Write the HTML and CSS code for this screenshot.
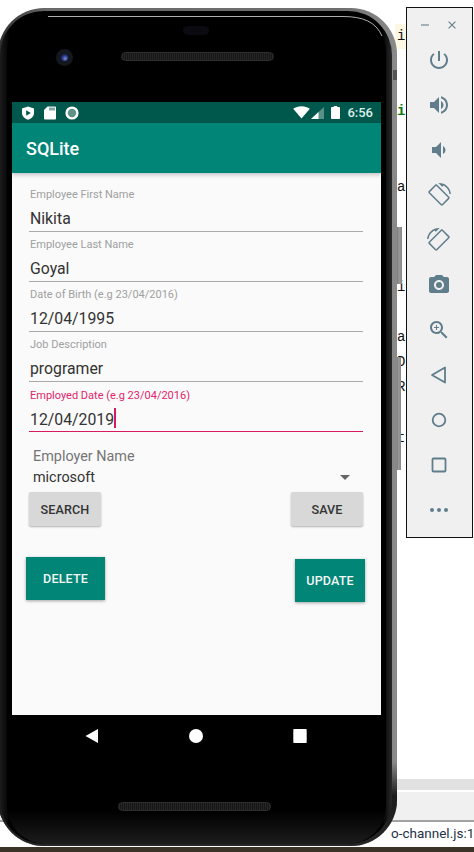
FILE: index.html
```html
<!DOCTYPE html>
<html lang="en">
<head>
<meta charset="utf-8">
<title>SQLite emulator</title>
<link rel="stylesheet" href="styles.css">
</head>
<body>
<div class="desktop">
  <div class="editor">
    <div class="code-line current">i</div>
    <div class="code-line"></div>
    <div class="code-line"></div>
    <div class="code-line keyword">i</div>
    <div class="code-line"></div>
    <div class="code-line"></div>
    <div class="code-line">a</div>
    <div class="code-line"></div>
    <div class="code-line"></div>
    <div class="code-line"></div>
    <div class="code-line">i</div>
    <div class="code-line"></div>
    <div class="code-line">a</div>
    <div class="code-line">D</div>
    <div class="code-line">R</div>
    <div class="code-line"></div>
    <div class="code-line">t</div>
  </div>

  <div class="devtools">
    <div class="tab-strip"></div>
    <div class="toolbar-strip"></div>
    <div class="console-line">o-channel.js:1</div>
    <div class="taskbar"></div>
  </div>

  <div class="side-button side-button-power"></div>
  <div class="side-button side-button-volume"></div>

  <div class="phone">
    <svg class="frame" viewBox="0 0 399 840" aria-hidden="true">
      <defs>
        <linearGradient id="rim" x1="0" y1="0" x2="1" y2="0">
          <stop offset="0" stop-color="#2e2e2e"/>
          <stop offset="0.12" stop-color="#6a6a6a"/>
          <stop offset="0.85" stop-color="#6e6e6e"/>
          <stop offset="1" stop-color="#8a8a8a"/>
        </linearGradient>
        <linearGradient id="rimfade" x1="0" y1="0" x2="0" y2="1">
          <stop offset="0" stop-color="#1c1c1c" stop-opacity="0"/>
          <stop offset="0.9" stop-color="#1c1c1c" stop-opacity="0"/>
          <stop offset="0.94" stop-color="#1c1c1c"/>
          <stop offset="1" stop-color="#262626"/>
        </linearGradient>
        <linearGradient id="body" x1="0" y1="0" x2="0" y2="1">
          <stop offset="0" stop-color="#000"/>
          <stop offset="0.96" stop-color="#000"/>
          <stop offset="1" stop-color="#1c1c1c"/>
        </linearGradient>
        <linearGradient id="edge" x1="0" y1="0" x2="1" y2="0">
          <stop offset="0" stop-color="#1c1c1c"/>
          <stop offset="0.025" stop-color="#000"/>
          <stop offset="0.975" stop-color="#000"/>
          <stop offset="1" stop-color="#2a2a2a"/>
        </linearGradient>
      </defs>
      <rect x="0" y="0" width="399" height="838" rx="46" fill="url(#rim)"/>
      <rect x="0" y="0" width="399" height="838" rx="46" fill="url(#rimfade)"/>
      <rect x="2" y="3" width="392" height="833" rx="44" fill="url(#edge)"/>
      <rect x="9" y="6" width="379" height="830" rx="38" fill="url(#body)"/>
      <path d="M50 8.500H345C365 8.500 378 14 384 28" fill="none" stroke="#b0b0b0" stroke-width="1"/>
      <rect x="395" y="62" width="4" height="10" fill="#555"/>
    </svg>

    <div class="top-bezel">
      <div class="notch-pill"></div>
      <div class="camera"><div class="lens"></div></div>
      <div class="speaker speaker-top"></div>
    </div>

    <div class="screen">
      <div class="status-bar">
        <div class="status-group">
          <svg class="status-icon" viewBox="0 0 14 14" aria-hidden="true">
            <path class="white" d="M7 0.5L13 2.4V7C13 10.4 10.4 12.7 7 13.8C3.6 12.7 1 10.4 1 7V2.4Z"/>
            <path class="teal" d="M5.2 4.2L9.8 7L5.2 9.8Z"/>
          </svg>
          <svg class="status-icon" viewBox="0 0 14 14" aria-hidden="true">
            <path class="white" d="M4.5 0.5H12A1 1 0 0 1 13 1.5V12.5A1 1 0 0 1 12 13.5H2A1 1 0 0 1 1 12.5V4Z"/>
            <path class="teal" d="M6.5 1.5H7.5V4.5H6.5ZM8.5 1.5H9.5V4.5H8.5ZM10.5 1.5H11.5V4.5H10.5Z"/>
          </svg>
          <svg class="status-icon" viewBox="0 0 14 14" aria-hidden="true">
            <circle class="white" cx="7" cy="7" r="6.6"/>
            <circle class="dim" cx="7" cy="7" r="4.2"/>
          </svg>
        </div>
        <div class="status-group status-right">
          <svg class="wifi" viewBox="0 0 17 13" aria-hidden="true">
            <path class="white" d="M8.5 12.5L0.2 2.8C2.4 1.1 5.3 0.2 8.5 0.2S14.6 1.1 16.8 2.8Z"/>
          </svg>
          <svg class="signal" viewBox="0 0 13 12" aria-hidden="true">
            <path class="white-soft" d="M0 12L13 0V12Z"/>
            <path class="white" d="M0 12L7.5 5V12Z"/>
          </svg>
          <svg class="battery" viewBox="0 0 9 13" aria-hidden="true">
            <path class="white" d="M2.8 0H6.2V1H8.2A.8.8 0 0 1 9 1.8V12.2A.8.8 0 0 1 8.2 13H.8A.8.8 0 0 1 0 12.2V1.8A.8.8 0 0 1 .8 1H2.8Z"/>
          </svg>
          <span class="clock">6:56</span>
        </div>
      </div>
      <div class="app-bar">SQLite</div>
      <div class="form">
        <div class="field">
          <div class="field-label">Employee First Name</div>
          <div class="field-value">Nikita</div>
        </div>
        <div class="field">
          <div class="field-label">Employee Last Name</div>
          <div class="field-value">Goyal</div>
        </div>
        <div class="field">
          <div class="field-label">Date of Birth (e.g 23/04/2016)</div>
          <div class="field-value">12/04/1995</div>
        </div>
        <div class="field">
          <div class="field-label">Job Description</div>
          <div class="field-value">programer</div>
        </div>
        <div class="field field-focused">
          <div class="field-label">Employed Date (e.g 23/04/2016)</div>
          <div class="field-value">12/04/2019<span class="caret"></span></div>
        </div>
        <div class="spinner">
          <div class="spinner-label">Employer Name</div>
          <div class="spinner-row">
            <span class="spinner-value">microsoft</span>
            <span class="spinner-arrow"></span>
          </div>
        </div>
        <div class="button-row">
          <button class="btn btn-grey btn-search">SEARCH</button>
          <button class="btn btn-grey btn-save">SAVE</button>
        </div>
        <div class="button-row button-row-teal">
          <button class="btn btn-teal btn-delete">DELETE</button>
          <button class="btn btn-teal btn-update">UPDATE</button>
        </div>
      </div>
    </div>

    <div class="nav-bar">
      <svg class="nav-icon" viewBox="0 0 14 14" aria-hidden="true"><path class="white" d="M13 0V14L0.5 7Z"/></svg>
      <svg class="nav-icon" viewBox="0 0 14 14" aria-hidden="true"><circle class="white" cx="7" cy="7" r="7"/></svg>
      <svg class="nav-icon" viewBox="0 0 14 14" aria-hidden="true"><rect class="white" x="0.3" y="0" width="13.4" height="14" rx="0.8"/></svg>
    </div>
    <div class="speaker speaker-bottom"></div>
  </div>

  <div class="panel">
    <div class="panel-head">
      <span class="panel-min"></span>
      <svg class="panel-close" viewBox="0 0 8 8" aria-hidden="true"><path d="M.6.6L7.4 7.4M7.4.6L.6 7.4"/></svg>
    </div>
    <div class="panel-tools">
      <svg class="tool" viewBox="0 0 24 24" aria-hidden="true"><path d="M13 3h-2v10h2V3zm4.83 2.17l-1.42 1.42C17.99 7.86 19 9.81 19 12c0 3.87-3.13 7-7 7s-7-3.13-7-7c0-2.19 1.01-4.14 2.58-5.42L6.17 5.17C4.23 6.82 3 9.26 3 12c0 4.97 4.03 9 9 9s9-4.03 9-9c0-2.74-1.23-5.18-3.17-6.83z"/></svg>
      <svg class="tool" viewBox="0 0 24 24" aria-hidden="true"><path d="M3 9v6h4l5 5V4L7 9H3zm13.5 3c0-1.77-1.02-3.29-2.5-4.03v8.05c1.48-.73 2.5-2.25 2.5-4.02zM14 3.23v2.06c2.89.86 5 3.54 5 6.71s-2.11 5.85-5 6.71v2.06c4.01-.91 7-4.49 7-8.77s-2.99-7.86-7-8.77z"/></svg>
      <svg class="tool" viewBox="0 0 24 24" aria-hidden="true"><path d="M18.5 12c0-1.77-1.02-3.29-2.5-4.03v8.05c1.48-.73 2.5-2.25 2.5-4.02zM5 9v6h4l5 5V4L9 9H5z"/></svg>
      <svg class="tool" viewBox="0 0 24 24" aria-hidden="true"><path d="M16.48 2.52c3.27 1.55 5.61 4.72 5.97 8.48h1.5C23.44 4.84 18.29 0 12 0l-.66.03 3.81 3.81 1.33-1.32zm-6.25-.77c-.59-.59-1.54-.59-2.12 0L1.75 8.11c-.59.59-.59 1.54 0 2.12l12.02 12.02c.59.59 1.54.59 2.12 0l6.36-6.36c.59-.59.59-1.54 0-2.12L10.23 1.75zm4.6 19.44L2.81 9.17l6.36-6.36 12.02 12.02-6.36 6.36z"/></svg>
      <svg class="tool tool-flip" viewBox="0 0 24 24" aria-hidden="true"><path d="M16.48 2.52c3.27 1.55 5.61 4.72 5.97 8.48h1.5C23.44 4.84 18.29 0 12 0l-.66.03 3.81 3.81 1.33-1.32zm-6.25-.77c-.59-.59-1.54-.59-2.12 0L1.75 8.11c-.59.59-.59 1.54 0 2.12l12.02 12.02c.59.59 1.54.59 2.12 0l6.36-6.36c.59-.59.59-1.54 0-2.12L10.23 1.75zm4.6 19.44L2.81 9.17l6.36-6.36 12.02 12.02-6.36 6.36z"/></svg>
      <svg class="tool" viewBox="0 0 24 24" aria-hidden="true"><path fill-rule="evenodd" d="M9 2L7.17 4H4c-1.1 0-2 .9-2 2v12c0 1.1.9 2 2 2h16c1.1 0 2-.9 2-2V6c0-1.1-.9-2-2-2h-3.17L15 2H9zm3 15c-2.76 0-5-2.24-5-5s2.24-5 5-5 5 2.24 5 5-2.24 5-5 5z"/><circle cx="12" cy="12" r="3"/></svg>
      <svg class="tool" viewBox="0 0 24 24" aria-hidden="true"><path d="M15.5 14h-.79l-.28-.27C15.41 12.59 16 11.11 16 9.5 16 5.91 13.09 3 9.5 3S3 5.91 3 9.5 5.91 16 9.5 16c1.61 0 3.09-.59 4.23-1.57l.27.28v.79l5 4.99L20.49 19l-4.99-5zm-6 0C7.01 14 5 11.99 5 9.5S7.01 5 9.5 5 14 7.01 14 9.5 11.99 14 9.5 14z"/><path d="M12 10h-2v2H9v-2H7V9h2V7h1v2h2v1z"/></svg>
      <svg class="tool tool-line" viewBox="0 0 24 24" aria-hidden="true"><path d="M18 4.500V19.500L5 12Z"/></svg>
      <svg class="tool tool-line" viewBox="0 0 24 24" aria-hidden="true"><circle cx="12" cy="12" r="6.300"/></svg>
      <svg class="tool tool-line" viewBox="0 0 24 24" aria-hidden="true"><rect x="5.500" y="5.500" width="13" height="13" rx="1"/></svg>
      <svg class="tool" viewBox="0 0 24 24" aria-hidden="true"><circle cx="5" cy="12" r="2"/><circle cx="12" cy="12" r="2"/><circle cx="19" cy="12" r="2"/></svg>
    </div>
  </div>
</div>
</body>
</html>
```
FILE: styles.css
```css
* { box-sizing: border-box; }

html, body {
  margin: 0;
  padding: 0;
  background: #fff;
}

.desktop {
  position: relative;
  width: 474px;
  height: 852px;
  overflow: hidden;
  background: #fff;
  font-family: Roboto, "Noto Sans", sans-serif;
}

/* background IDE window, mostly hidden behind the emulator */
.editor {
  position: absolute;
  left: 395px;
  top: 24px;
  width: 11px;
  font-family: "Liberation Mono", monospace;
  font-size: 14px;
  color: #111;
}

.code-line {
  height: 25.100px;
  line-height: 25px;
  padding-left: 2px;
  overflow: hidden;
}

.current { background: #fdf8e3; }
.keyword { color: #0a7a10; font-weight: 700; }

.devtools {
  position: absolute;
  left: 0;
  right: 0;
  top: 779px;
  bottom: 0;
  display: flex;
  flex-direction: column;
}

.tab-strip {
  height: 11px;
  background: #e1e1e1;
}

.toolbar-strip {
  height: 32px;
  background: #f0f0f0;
  border-top: 2px solid #fff;
  border-bottom: 2px solid #a2a2a2;
}

.console-line {
  height: 25px;
  padding-left: 391px;
  font: 13.500px/23px Roboto, "Liberation Sans", sans-serif;
  color: #1f3347;
  white-space: nowrap;
  background: #fff;
}

.taskbar {
  flex: 1;
  background: #3b3328;
}

.side-button {
  position: absolute;
  left: 396px;
  width: 6px;
  background: linear-gradient(90deg, #666, #999 50%, #888);
}

.side-button-power { top: 227px; height: 57px; }
.side-button-volume { top: 357px; height: 113px; width: 5px; }

/* emulator */
.phone {
  position: absolute;
  left: -2px;
  top: 8px;
  width: 399px;
  height: 840px;
  padding-left: 14px;
  display: flex;
  flex-direction: column;
  align-items: flex-start;
}

.frame {
  position: absolute;
  inset: 0;
  width: 399px;
  height: 840px;
}

.top-bezel {
  position: relative;
  width: 369px;
  height: 94px;
  flex: none;
}

.notch-pill {
  position: absolute;
  left: 171px;
  top: 18px;
  width: 26px;
  height: 9px;
  border-radius: 5px;
  background: #0a0a10;
}

.camera {
  position: absolute;
  left: 44px;
  top: 41px;
  width: 17px;
  height: 17px;
  border-radius: 50%;
  background: #15171f;
  display: flex;
  align-items: center;
  justify-content: center;
}

.lens {
  width: 7px;
  height: 7px;
  border-radius: 50%;
  background: radial-gradient(circle at 60% 65%, #7b8fd8 0, #27398a 45%, #0a0d24 100%);
}

.speaker {
  height: 9px;
  border-radius: 5px;
  background: repeating-linear-gradient(90deg, #262626 0, #262626 1px, #161616 1px, #161616 2px);
  border: 1px solid #2e2e2e;
}

.speaker-top {
  position: absolute;
  left: 109px;
  top: 44px;
  width: 153px;
}

.screen {
  position: relative;
  width: 369px;
  height: 613px;
  flex: none;
  background: #fafafa;
  display: flex;
  flex-direction: column;
}

.status-bar {
  height: 21px;
  flex: none;
  padding: 0 8px 0 9px;
  background: #00574b;
  display: flex;
  align-items: center;
  justify-content: space-between;
}

.status-group {
  display: flex;
  align-items: center;
  gap: 8px;
}

.status-right { gap: 0; }

.status-icon { width: 14px; height: 14px; }
.wifi { width: 17px; height: 13px; margin-right: 1px; }
.signal { width: 13px; height: 12px; margin-right: 7px; }
.battery { width: 9px; height: 13px; margin-right: 7px; }

.white { fill: #fff; }
.white-soft { fill: #fff; fill-opacity: 0.35; }
.teal { fill: #00574b; }
.dim { fill: #5f9388; }

.clock {
  font-size: 13px;
  font-weight: 500;
  line-height: 21px;
  color: #dcefeb;
}

.app-bar {
  position: relative;
  height: 50px;
  flex: none;
  padding-left: 14px;
  background: #008577;
  color: #fff;
  font-size: 18px;
  font-weight: 500;
  line-height: 52px;
  box-shadow: 0 2px 4px rgba(0, 0, 0, 0.22);
}

.form {
  flex: 1;
  padding: 14px 18px 0 17px;
  display: flex;
  flex-direction: column;
}

.field {
  height: 50.150px;
  flex: none;
}

.field-label {
  padding-left: 1px;
  font-size: 11px;
  line-height: 16px;
  color: #a0a0a0;
  white-space: nowrap;
}

.field-value {
  margin-top: 4px;
  height: 24.500px;
  padding-left: 1px;
  font-size: 15.800px;
  line-height: 24px;
  color: #333;
  border-bottom: 1.500px solid #aaa;
  white-space: nowrap;
}

.field-focused .field-label { color: #e0246a; }
.field-focused .field-value { border-bottom-color: #d81b60; }

.caret {
  display: inline-block;
  width: 1.500px;
  height: 20px;
  margin-bottom: -3px;
  background: #d81b60;
}

.spinner {
  margin-top: 9.500px;
  padding-left: 4px;
}

.spinner-label {
  font-size: 14.400px;
  line-height: 20px;
  color: #757575;
}

.spinner-row {
  height: 21px;
  padding-right: 13px;
  display: flex;
  align-items: center;
  justify-content: space-between;
}

.spinner-value {
  font-size: 14.400px;
  color: #333;
}

.spinner-arrow {
  width: 0;
  height: 0;
  border-left: 5px solid transparent;
  border-right: 5px solid transparent;
  border-top: 5px solid #666;
}

.button-row {
  display: flex;
  justify-content: space-between;
  align-items: flex-start;
  margin-top: 4px;
}

.button-row-teal {
  margin-top: 31px;
  margin-left: -3px;
  margin-right: -2px;
}

.btn {
  border: 0;
  padding: 0;
  font-family: Roboto, sans-serif;
  font-size: 12.600px;
  font-weight: 500;
  letter-spacing: 0.100px;
}

.btn-grey {
  width: 72px;
  height: 34px;
  border-radius: 2px;
  background: #d7d8d7;
  color: #333;
  box-shadow: 0 1px 2px rgba(0, 0, 0, 0.3);
}

.btn-teal {
  background: #008577;
  color: #f2f7f6;
  box-shadow: 0 1px 3px rgba(0, 0, 0, 0.35);
}

.btn-delete { width: 79px; height: 43px; }
.btn-update { width: 70px; height: 43px; margin-top: 2px; }

.nav-bar {
  position: relative;
  width: 369px;
  height: 44px;
  flex: none;
  padding: 14px 74.500px 0 73px;
  display: flex;
  align-items: flex-start;
  justify-content: space-between;
}

.nav-icon { width: 14px; height: 14px; display: block; }

.speaker-bottom {
  position: relative;
  width: 153px;
  margin-top: 43px;
  margin-left: 106px;
}

/* extended controls panel */
.panel {
  position: absolute;
  left: 406px;
  top: 7px;
  width: 67px;
  height: 531px;
  background: #f0f0f0;
  border: 1px solid #111;
  display: flex;
  flex-direction: column;
  align-items: center;
}

.panel-head {
  width: 100%;
  height: 32px;
  flex: none;
  padding: 12px 16px 0 14px;
  display: flex;
  justify-content: space-between;
  align-items: flex-start;
}

.panel-min {
  width: 8px;
  height: 1.500px;
  margin-top: 4px;
  background: #a3b1b8;
}

.panel-close {
  width: 8px;
  height: 8px;
  margin-top: 1px;
  fill: none;
  stroke: #607d8b;
  stroke-width: 1.100;
}

.panel-tools {
  display: flex;
  flex-direction: column;
  align-items: center;
  gap: 21px;
  margin-top: 8px;
  margin-right: 1px;
}

.tool {
  display: block;
  width: 24px;
  height: 24px;
  fill: #607d8b;
}

.tool-flip { transform: scaleX(-1); }

.tool-line {
  fill: none;
  stroke: #607d8b;
  stroke-width: 1.800;
  stroke-linejoin: round;
}
```
